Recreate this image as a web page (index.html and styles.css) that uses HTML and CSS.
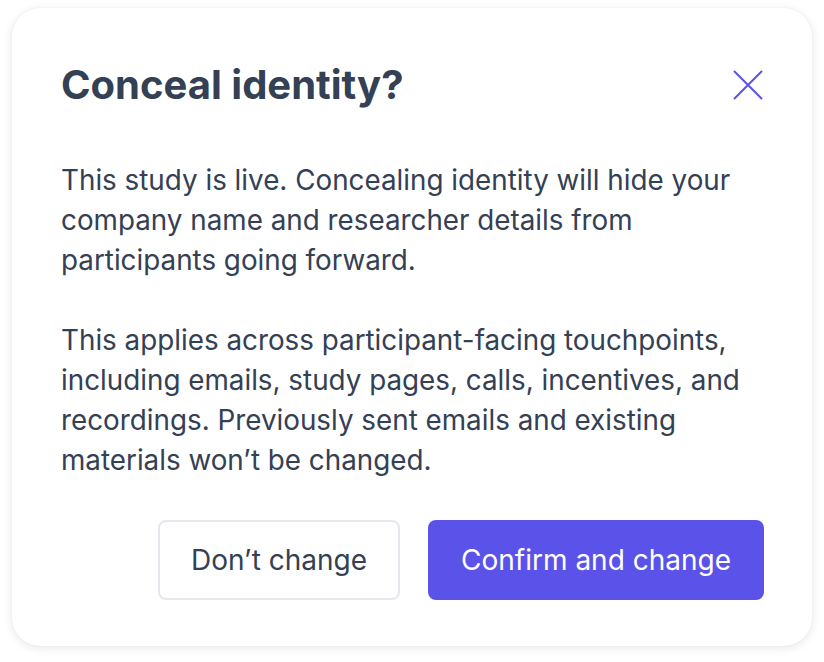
FILE: index.html
```html
<!DOCTYPE html>
<html lang="en">
<head>
<meta charset="utf-8">
<title>Conceal identity?</title>
<link rel="stylesheet" href="styles.css">
</head>
<body>
<div class="dialog" role="dialog" aria-labelledby="dlg-title">
  <div class="dialog-header">
    <h1 id="dlg-title" class="dialog-title">Conceal identity?</h1>
    <button class="close-btn" aria-label="Close">
      <svg width="30" height="30" viewBox="0 0 30 30" fill="none" stroke="#5b52ea" stroke-width="2" stroke-linecap="round">
        <path d="M1.5 1.5 L28.5 28.5 M28.5 1.5 L1.5 28.5"/>
      </svg>
    </button>
  </div>
  <div class="dialog-body">
    <p>This study is live. Concealing identity will hide your company name and researcher details from participants going forward.</p>
    <p>This applies across participant-facing touchpoints, including emails, study pages, calls, incentives, and recordings. Previously sent emails and existing materials won’t be changed.</p>
  </div>
  <div class="dialog-actions">
    <button class="btn btn-secondary">Don’t change</button>
    <button class="btn btn-primary">Confirm and change</button>
  </div>
</div>
</body>
</html>
```
FILE: styles.css
```css
* { box-sizing: border-box; }
html, body { margin: 0; padding: 0; background: #ffffff; }
body {
  font-family: Inter, "Noto Sans", sans-serif;
  padding: 8px 12px 16px 12px;
}
.dialog {
  width: 800px;
  height: 638px;
  background: #ffffff;
  border-radius: 28px;
  box-shadow: 0 2px 10px rgba(16, 24, 40, 0.10), 0 0 2px rgba(16, 24, 40, 0.06);
  padding: 51px 48px 46px 49px;
  display: flex;
  flex-direction: column;
}
.dialog-header {
  display: flex;
  justify-content: space-between;
  align-items: center;
}
.dialog-title {
  margin: 0;
  font-size: 40px;
  line-height: 52px;
  font-weight: 700;
  color: #344054;
}
.close-btn {
  background: none;
  border: 0;
  padding: 0;
  width: 30px;
  height: 30px;
  margin-right: 1px;
  display: flex;
  cursor: pointer;
}
.dialog-body {
  margin-top: 49px;
  color: #344054;
  font-size: 27.8px;
  line-height: 40px;
}
.dialog-body p { margin: 0 0 40px 0; }
.dialog-body p:last-child { margin-bottom: 0; }
.dialog-actions {
  margin-top: auto;
  display: flex;
  justify-content: flex-end;
  gap: 28px;
}
.btn {
  height: 80px;
  border-radius: 8px;
  font-family: Inter, "Noto Sans", sans-serif;
  font-size: 28px;
  font-weight: 400;
  padding: 0 33px;
  cursor: pointer;
}
.btn-secondary {
  background: #ffffff;
  color: #344054;
  border: 2px solid #e4e7ec;
  padding: 0 31px;
}
.btn-primary {
  background: #5b52ea;
  color: #ffffff;
  border: 0;
}
```
